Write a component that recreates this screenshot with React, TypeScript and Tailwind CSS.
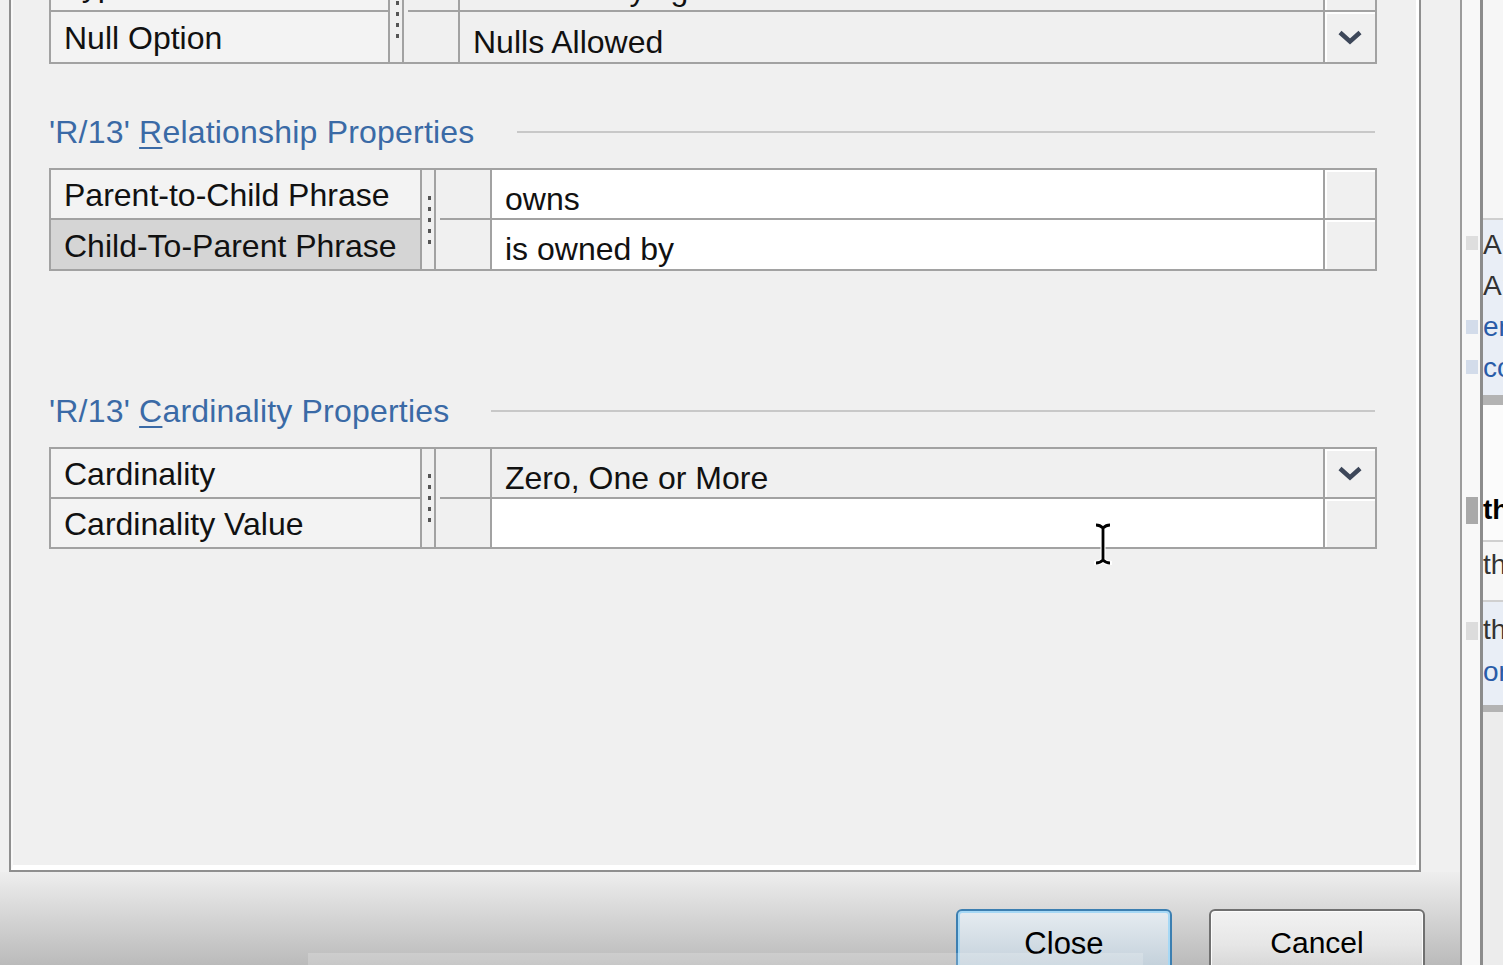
import React from "react";

type Row = {
  label: string;
  value: string;
  dropdown?: boolean;
  selected?: boolean;
  white?: boolean;
  h: string;
};

function Chevron() {
  return (
    <svg width="26" height="16" viewBox="0 0 26 16">
      <path d="M3 3.5 L13 12.5 L23 3.5" fill="none" stroke="#3d4759" strokeWidth="4.5" strokeLinecap="butt" strokeLinejoin="miter" />
    </svg>
  );
}

function Dots() {
  return (
    <>
      {[0, 1, 2, 3, 4].map((i) => (
        <div key={i} className="w-[3px] h-[4px] bg-[#555555] shrink-0" />
      ))}
    </>
  );
}

function PropTable({
  rows,
  labelW,
  dotsPad,
  className,
}: {
  rows: Row[];
  labelW: string;
  dotsPad?: string;
  className?: string;
}) {
  const last = rows.length - 1;
  const div = (i: number) => (i < last ? "border-b-2 border-[#a2a2a2]" : "");
  return (
    <div className={`flex border-2 border-[#a2a2a2] ${className ?? ""}`}>
      <div className={`${labelW} shrink-0 flex flex-col`}>
        {rows.map((r, i) => (
          <div
            key={i}
            className={`${r.h} ${div(i)} ${r.selected ? "bg-[#d5d5d5]" : "bg-[#f3f3f3]"} flex items-center pl-[13px] pt-[2px] text-[32px] leading-none whitespace-nowrap overflow-hidden`}
          >
            {r.label}
          </div>
        ))}
      </div>
      <div
        className={`w-[16px] shrink-0 border-l-2 border-r-2 border-[#a2a2a2] bg-[#f0f0f0] flex flex-col items-center justify-center gap-[7px] pl-[3px] ${dotsPad ?? ""}`}
      >
        <Dots />
      </div>
      <div className="w-[54px] shrink-0 flex flex-col">
        {rows.map((r, i) => (
          <div key={i} className={`${r.h} flex flex-col bg-[#f0f0f0]`}>
            <div className="flex-1" />
            {i < last && <div className="h-[2px] ml-[4px] bg-[#a2a2a2]" />}
          </div>
        ))}
      </div>
      <div className="flex-1 border-l-2 border-[#a2a2a2] flex flex-col">
        {rows.map((r, i) => (
          <div
            key={i}
            className={`${r.h} ${div(i)} ${r.white ? "bg-white" : "bg-[#f0f0f0]"} flex items-center pl-[13px] pt-[9px] text-[32px] leading-none whitespace-nowrap overflow-hidden`}
          >
            {r.value}
          </div>
        ))}
      </div>
      <div className="w-[52px] shrink-0 border-l-2 border-[#a2a2a2] flex flex-col">
        {rows.map((r, i) => (
          <div
            key={i}
            className={`${r.h} ${div(i)} bg-[#f0f0f0] shadow-[inset_2px_2px_0_#ffffff] flex items-center justify-center`}
          >
            {r.dropdown && <Chevron />}
          </div>
        ))}
      </div>
    </div>
  );
}

function SectionHeader({
  pre,
  acc,
  rest,
  className,
}: {
  pre: string;
  acc: string;
  rest: string;
  className?: string;
}) {
  return (
    <div className={`flex items-center h-[44px] ${className ?? ""}`}>
      <span className="text-[32px] leading-none tracking-[0.2px] text-[#3a6aa6] whitespace-nowrap">
        {pre}
        <span className="underline decoration-[2px] underline-offset-[4px]">{acc}</span>
        {rest}
      </span>
      <div className="flex-1 ml-[42px] mr-[2px] h-[2px] bg-[#c8c8c8]" />
    </div>
  );
}

function IBeam() {
  const d = "M2 2 Q6 2 9 5 Q12 2 16 2 M9 5 V37 M2 40 Q6 40 9 37 Q12 40 16 40";
  return (
    <svg width="18" height="42" viewBox="0 0 18 42">
      <path d={d} stroke="#ffffff" strokeWidth="5" fill="none" strokeLinecap="round" />
      <path d={d} stroke="#000000" strokeWidth="2.8" fill="none" />
    </svg>
  );
}

export default function App() {
  return (
    <div className="relative w-[1503px] h-[965px] overflow-hidden bg-[#f0f0f0] font-['Liberation_Sans',Arial,sans-serif] text-[#111111] flex">
      {/* dialog */}
      <div className="w-[1462px] h-full shrink-0 border-r-2 border-[#9c9c9c] flex flex-col">
        <div className="ml-[9px] w-[1412px] h-[872px] shrink-0 border-l-2 border-r-2 border-b-2 border-[#8f8f8f]">
          <div className="h-full border-l-2 border-r-[3px] border-b-[5px] border-l-[#f8f8f8] border-r-white border-b-white overflow-hidden">
            <div className="-mt-[44px] ml-[36px] w-[1328px] flex flex-col">
              <PropTable
                labelW="w-[337px]"
                dotsPad="pt-[8px]"
                rows={[
                  { label: "Type", value: "Non-Identifying", dropdown: true, h: "h-[54px]" },
                  { label: "Null Option", value: "Nulls Allowed", dropdown: true, h: "h-[50px]" },
                ]}
              />
              <SectionHeader className="mt-[46px]" pre="'R/13' " acc="R" rest="elationship Properties" />
              <PropTable
                className="mt-[14px]"
                labelW="w-[369px]"
                rows={[
                  { label: "Parent-to-Child Phrase", value: "owns", white: true, h: "h-[50px]" },
                  { label: "Child-To-Parent Phrase", value: "is owned by", white: true, selected: true, h: "h-[49px]" },
                ]}
              />
              <SectionHeader className="mt-[118px]" pre="'R/13' " acc="C" rest="ardinality Properties" />
              <PropTable
                className="mt-[14px]"
                labelW="w-[369px]"
                rows={[
                  { label: "Cardinality", value: "Zero, One or More", dropdown: true, h: "h-[50px]" },
                  { label: "Cardinality Value", value: "", white: true, h: "h-[48px]" },
                ]}
              />
            </div>
          </div>
        </div>
        <div className="flex-1 bg-gradient-to-b from-[#eeeeee] to-[#b2b2b2] flex justify-end gap-[37px] pr-[35px] pt-[37px]">
          <button className="w-[216px] h-[72px] shrink-0 rounded-[6px] border-2 border-[#3c7fb1] bg-gradient-to-b from-[#e6ecf1] to-[#bccbd6] shadow-[inset_0_0_0_2px_#a6d8f5] flex justify-center pt-[17px] text-[31px] leading-none text-black">
            Close
          </button>
          <button className="w-[216px] h-[72px] shrink-0 rounded-[6px] border-2 border-[#707070] bg-gradient-to-b from-[#f2f2f2] via-[#e6e6e6] to-[#cfcfcf] shadow-[inset_0_0_0_1px_#fcfcfc] flex justify-center pt-[17px] text-[30px] leading-none text-black">
            Cancel
          </button>
        </div>
      </div>

      {/* gap strip between dialog and other window */}
      <div className="w-[18px] h-full shrink-0 bg-[#f8f8f8] flex flex-col items-end pr-[2px]">
        <div className="h-[236px] shrink-0" />
        <div className="w-[12px] h-[14px] bg-[#dedede] shrink-0" />
        <div className="h-[70px] shrink-0" />
        <div className="w-[12px] h-[14px] bg-[#d3dcea] shrink-0" />
        <div className="h-[26px] shrink-0" />
        <div className="w-[12px] h-[14px] bg-[#d3dcea] shrink-0" />
        <div className="h-[123px] shrink-0" />
        <div className="w-[12px] h-[27px] bg-[#a9a9a9] shrink-0" />
        <div className="h-[98px] shrink-0" />
        <div className="w-[12px] h-[18px] bg-[#dcdcdc] shrink-0" />
      </div>

      {/* other window edge */}
      <div className="flex-1 h-full border-l-[3px] border-[#8c8c8c] flex flex-col overflow-hidden text-[28px] leading-none whitespace-nowrap">
        <div className="h-[218px] shrink-0 bg-[#f6f6f6]" />
        <div className="h-[2px] shrink-0 bg-[#cfcfcf]" />
        <div className="h-[175px] shrink-0 bg-[#e9eef6] flex flex-col pt-[4px]">
          <div className="h-[41px] flex items-center text-[#333333]">Ar</div>
          <div className="h-[41px] flex items-center text-[#333333]">Ar</div>
          <div className="h-[41px] flex items-center text-[#2a5ca8]">er</div>
          <div className="h-[41px] flex items-center text-[#2a5ca8]">co</div>
        </div>
        <div className="h-[10px] shrink-0 bg-[#b3b3b3]" />
        <div className="h-[90px] shrink-0 bg-[#fbfbfb]" />
        <div className="h-[30px] shrink-0 bg-[#fbfbfb] flex items-center font-bold text-black">th</div>
        <div className="h-[15px] shrink-0 bg-[#fbfbfb]" />
        <div className="h-[2px] shrink-0 bg-[#d0d0d0]" />
        <div className="h-[46px] shrink-0 bg-[#f7f7f7] flex items-center text-[#333333]">th</div>
        <div className="h-[12px] shrink-0 bg-[#f7f7f7]" />
        <div className="h-[2px] shrink-0 bg-[#d0d0d0]" />
        <div className="h-[56px] shrink-0 bg-[#e9eef6] flex items-center text-[#333333]">th</div>
        <div className="h-[28px] shrink-0 bg-[#e9eef6] flex items-center text-[#2a5ca8]">or</div>
        <div className="h-[19px] shrink-0 bg-[#e9eef6]" />
        <div className="h-[7px] shrink-0 bg-[#b3b3b3]" />
        <div className="flex-1 bg-[#ececec]" />
      </div>

      {/* text cursor */}
      <div className="absolute left-[1094px] top-[523px]">
        <IBeam />
      </div>

      {/* video overlay strip at the bottom */}
      <div className="absolute left-[308px] top-[953px] w-[835px] h-[12px] bg-white/20" />
    </div>
  );
}
